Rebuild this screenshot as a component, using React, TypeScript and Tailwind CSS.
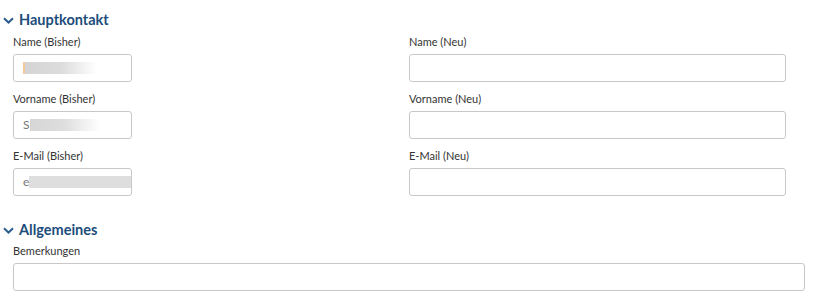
import React from 'react'

function Chevron() {
  return (
    <svg width="11" height="7" viewBox="0 0 11 7" className="shrink-0">
      <path d="M1 1.2 L5.5 5.5 L10 1.2" fill="none" stroke="#2b5d8e" strokeWidth="2" />
    </svg>
  )
}

function SectionHeader({ title }: { title: string }) {
  return (
    <div className="flex items-center h-4 pl-[3px]">
      <Chevron />
      <span className="ml-[5px] text-[14.5px] leading-4 font-bold text-[#1d4d7b]">{title}</span>
    </div>
  )
}

function Redacted({ letter, width, gradient }: { letter?: string; width: number; gradient?: boolean }) {
  return (
    <div className="flex items-center h-full pl-[9px]">
      {letter && <span className="text-[12px] text-[#777]">{letter}</span>}
      <div
        className={
          gradient
            ? 'h-[12px] bg-gradient-to-r from-[#d6d6d6] via-[#dedede] to-white'
            : 'h-[12px] bg-[#dedede]'
        }
        style={{ width }}
      />
    </div>
  )
}

function Field({
  label,
  width,
  children,
}: {
  label: string
  width: string
  children?: React.ReactNode
}) {
  return (
    <div className="flex flex-col">
      <div className="h-[14px] text-[11px] leading-[14px] text-[#333]">{label}</div>
      <div className={`mt-[5px] h-[28px] ${width} border border-[#c8c8c8] rounded-[3px] bg-white overflow-hidden`}>
        {children}
      </div>
    </div>
  )
}

export default function App() {
  return (
    <div className="w-[818px] h-[299px] bg-white pt-3" style={{ fontFamily: 'Lato, "Open Sans", sans-serif' }}>
      <SectionHeader title="Hauptkontakt" />
      <div className="mt-[7px] pl-[13px] flex">
        <div className="w-[396px] flex flex-col gap-[10px]">
          <Field label="Name (Bisher)" width="w-[119px]">
            <div className="flex items-center h-full pl-[9px]">
              <div className="w-[2px] h-[12px] bg-[#f3c89a]" />
              <div className="h-[12px] w-[72px] bg-gradient-to-r from-[#d4d4d4] via-[#dcdcdc] to-white" />
            </div>
          </Field>
          <Field label="Vorname (Bisher)" width="w-[119px]">
            <Redacted letter="S" width={70} gradient />
          </Field>
          <Field label="E-Mail (Bisher)" width="w-[119px]">
            <Redacted letter="e" width={110} />
          </Field>
        </div>
        <div className="w-[377px] flex flex-col gap-[10px]">
          <Field label="Name (Neu)" width="w-[377px]" />
          <Field label="Vorname (Neu)" width="w-[377px]" />
          <Field label="E-Mail (Neu)" width="w-[377px]" />
        </div>
      </div>
      <div className="mt-[26px]">
        <SectionHeader title="Allgemeines" />
      </div>
      <div className="mt-[6px] pl-[13px]">
        <Field label="Bemerkungen" width="w-[792px]" />
      </div>
    </div>
  )
}
